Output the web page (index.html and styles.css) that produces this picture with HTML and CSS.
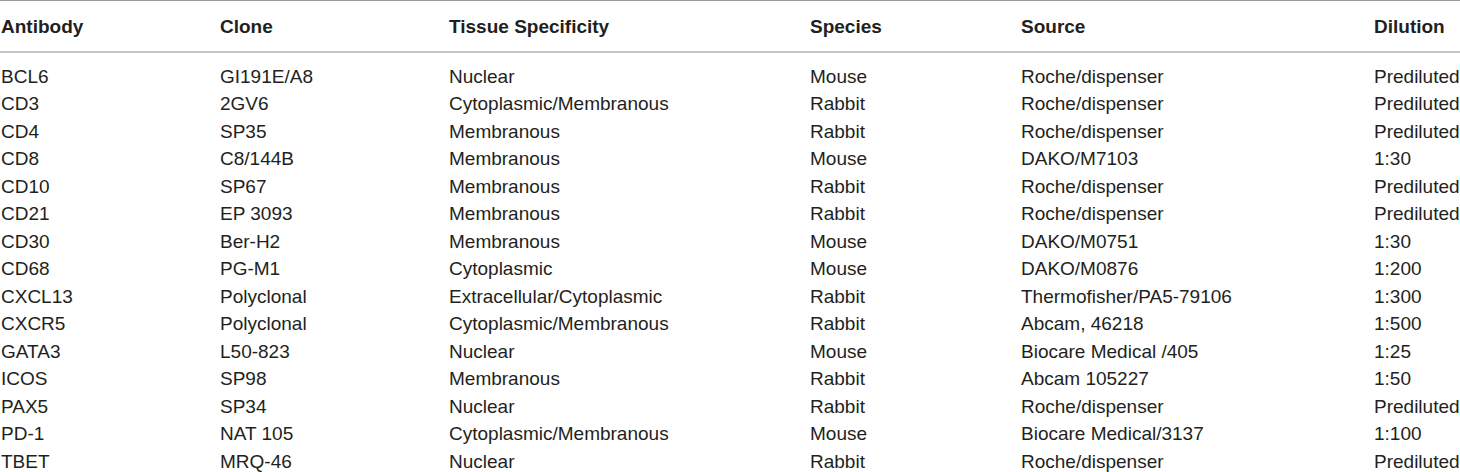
FILE: index.html
```html
<!DOCTYPE html>
<html>
<head>
<meta charset="utf-8">
<link rel="stylesheet" href="styles.css">
</head>
<body>
<table class="ab-table">
  <colgroup>
    <col class="c1"><col class="c2"><col class="c3"><col class="c4"><col class="c5"><col class="c6">
  </colgroup>
  <thead>
    <tr><th>Antibody</th><th>Clone</th><th>Tissue Specificity</th><th>Species</th><th>Source</th><th>Dilution</th></tr>
  </thead>
  <tbody>
    <tr><td>BCL6</td><td>GI191E/A8</td><td>Nuclear</td><td>Mouse</td><td>Roche/dispenser</td><td>Prediluted</td></tr>
    <tr><td>CD3</td><td>2GV6</td><td>Cytoplasmic/Membranous</td><td>Rabbit</td><td>Roche/dispenser</td><td>Prediluted</td></tr>
    <tr><td>CD4</td><td>SP35</td><td>Membranous</td><td>Rabbit</td><td>Roche/dispenser</td><td>Prediluted</td></tr>
    <tr><td>CD8</td><td>C8/144B</td><td>Membranous</td><td>Mouse</td><td>DAKO/M7103</td><td>1:30</td></tr>
    <tr><td>CD10</td><td>SP67</td><td>Membranous</td><td>Rabbit</td><td>Roche/dispenser</td><td>Prediluted</td></tr>
    <tr><td>CD21</td><td>EP 3093</td><td>Membranous</td><td>Rabbit</td><td>Roche/dispenser</td><td>Prediluted</td></tr>
    <tr><td>CD30</td><td>Ber-H2</td><td>Membranous</td><td>Mouse</td><td>DAKO/M0751</td><td>1:30</td></tr>
    <tr><td>CD68</td><td>PG-M1</td><td>Cytoplasmic</td><td>Mouse</td><td>DAKO/M0876</td><td>1:200</td></tr>
    <tr><td>CXCL13</td><td>Polyclonal</td><td>Extracellular/Cytoplasmic</td><td>Rabbit</td><td>Thermofisher/PA5-79106</td><td>1:300</td></tr>
    <tr><td>CXCR5</td><td>Polyclonal</td><td>Cytoplasmic/Membranous</td><td>Rabbit</td><td>Abcam, 46218</td><td>1:500</td></tr>
    <tr><td>GATA3</td><td>L50-823</td><td>Nuclear</td><td>Mouse</td><td>Biocare Medical /405</td><td>1:25</td></tr>
    <tr><td>ICOS</td><td>SP98</td><td>Membranous</td><td>Rabbit</td><td>Abcam 105227</td><td>1:50</td></tr>
    <tr><td>PAX5</td><td>SP34</td><td>Nuclear</td><td>Rabbit</td><td>Roche/dispenser</td><td>Prediluted</td></tr>
    <tr><td>PD-1</td><td>NAT 105</td><td>Cytoplasmic/Membranous</td><td>Mouse</td><td>Biocare Medical/3137</td><td>1:100</td></tr>
    <tr><td>TBET</td><td>MRQ-46</td><td>Nuclear</td><td>Rabbit</td><td>Roche/dispenser</td><td>Prediluted</td></tr>
  </tbody>
</table>
</body>
</html>
```
FILE: styles.css
```css
html, body {
  margin: 0;
  padding: 0;
  background: #ffffff;
}
body {
  font-family: "Liberation Sans", Arial, Helvetica, sans-serif;
  color: #231f20;
}
.ab-table {
  border-collapse: collapse;
  table-layout: fixed;
  width: 1460px;
  font-size: 19px;
}
.c1 { width: 219px; }
.c2 { width: 229px; }
.c3 { width: 361px; }
.c4 { width: 211px; }
.c5 { width: 353px; }
.c6 { width: 87px; }
.ab-table th,
.ab-table td {
  padding: 0 0 0 1px;
  text-align: left;
  white-space: nowrap;
  vertical-align: middle;
}
.ab-table th {
  font-weight: bold;
  height: 48px;
  border-top: 1px solid #9a9a9a;
  border-bottom: 2px solid #c4c4c4;
  padding-top: 2px;
}
.ab-table td {
  height: 27.5px;
  line-height: 22px;
}
.ab-table tbody tr:first-child td {
  padding-top: 10px;
}
```
